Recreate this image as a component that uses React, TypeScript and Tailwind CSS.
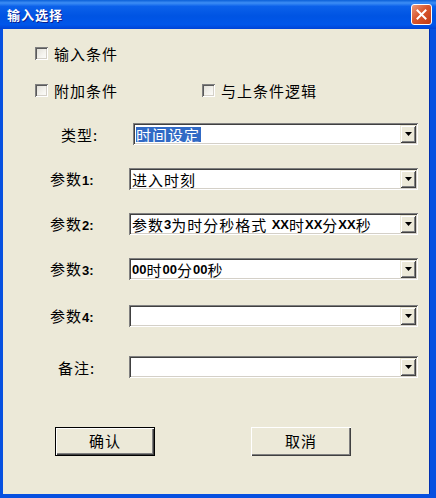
import React from "react";

const FONT = { fontFamily: '"Noto Sans CJK SC", "Noto Sans", sans-serif' };

function Check({ label }: { label: string }) {
  return (
    <div className="flex items-center h-[16px]">
      <div className="w-[13px] h-[13px] bg-[linear-gradient(135deg,#DCDAD2_0%,#F5F4EF_60%,#FFFFFF_100%)] shadow-[inset_1px_1px_0_#808080,inset_-1px_-1px_0_#ffffff,inset_2px_2px_0_#5A5A5A,inset_-2px_-2px_0_#d4d0c8]" />
      <span className="ml-[6px] text-[15px] tracking-[1px] text-black leading-none">{label}</span>
    </div>
  );
}

function Combo({ width, children }: { width: string; children?: React.ReactNode }) {
  return (
    <div
      className={`${width} h-[22px] bg-white flex items-center p-[2px] shadow-[inset_1px_1px_0_#808080,inset_-1px_-1px_0_#ffffff,inset_2px_2px_0_#404040,inset_-2px_-2px_0_#d4d0c8]`}
    >
      <div className="flex-1 h-full flex items-center pl-[1px] text-[15px] tracking-[1px] text-black leading-none whitespace-pre overflow-hidden">
        {children}
      </div>
      <div className="w-[16px] h-[18px] bg-[#ECE9D8] flex items-center justify-center shadow-[inset_1px_1px_0_#ece9d8,inset_-1px_-1px_0_#404040,inset_2px_2px_0_#ffffff,inset_-2px_-2px_0_#808080]">
        <svg width="7" height="4" viewBox="0 0 7 4">
          <path d="M0 0h7L3.5 4z" fill="#000" />
        </svg>
      </div>
    </div>
  );
}

function B({ children }: { children: React.ReactNode }) {
  return (
    <span className="font-bold tracking-[0px]" style={{ fontFamily: '"Liberation Sans", sans-serif', fontSize: 13 }}>
      {children}
    </span>
  );
}

function Row({ label, pl, w, mt, children }: { label: React.ReactNode; pl: string; w: string; mt: string; children?: React.ReactNode }) {
  return (
    <div className={`flex items-center ${mt}`}>
      <div className={`${w} ${pl} text-[15px] tracking-[1px] text-black leading-none whitespace-nowrap`}>{label}</div>
      <Combo width={w === "w-[130px]" ? "w-[285px]" : "w-[289px]"}>{children}</Combo>
    </div>
  );
}

function Btn({ label, def }: { label: string; def?: boolean }) {
  return (
    <div
      className={`w-[100px] h-[29px] bg-[#ECE9D8] flex items-center justify-center text-[15px] tracking-[1px] text-black ${
        def
          ? "border border-black shadow-[inset_1px_1px_0_#ffffff,inset_-1px_-1px_0_#404040,inset_-2px_-2px_0_#808080]"
          : "shadow-[inset_1px_1px_0_#ffffff,inset_-1px_-1px_0_#404040,inset_-2px_-2px_0_#808080]"
      }`}
    >
      {label}
    </div>
  );
}

export default function App() {
  return (
    <div className="w-[436px] h-[498px] flex flex-col bg-[#0650E0]" style={FONT}>
      <div className="h-[29px] flex items-center justify-between pl-[7px] pr-[4px] bg-[linear-gradient(to_bottom,#0A5FD8_0%,#3D8EF5_10%,#0B61EA_22%,#0054E3_55%,#0056EA_85%,#0043D6_100%)]">
        <span className="text-white font-bold text-[13px] tracking-[1px] [text-shadow:1px_1px_0_#0A1E8F]">输入选择</span>
        <div className="w-[21px] h-[21px] rounded-[3px] border border-white bg-[linear-gradient(135deg,#EC9A7C_0%,#D9572E_45%,#C23A14_100%)] flex items-center justify-center">
          <svg width="11" height="11" viewBox="0 0 11 11">
            <path d="M1.5 1.5l8 8M9.5 1.5l-8 8" stroke="#fff" strokeWidth="2" strokeLinecap="square" />
          </svg>
        </div>
      </div>
      <div className="flex-1 ml-[3px] mr-[6px] mb-[4px] bg-[#ECE9D8] flex flex-col pl-[32px] pt-[16px] shadow-[inset_-1px_0_0_#0030B0]">
        <Check label="输入条件" />
        <div className="flex mt-[21px]">
          <div className="w-[167px]">
            <Check label="附加条件" />
          </div>
          <Check label="与上条件逻辑" />
        </div>
        <div className="-ml-[32px] flex flex-col">
          <Row label="类型:" pl="pl-[58px]" w="w-[130px]" mt="mt-[25px]">
            <span className="bg-[#316AC5] text-white pr-[1px]">时间设定</span>
          </Row>
          <Row label={<>参数<B>1:</B></>} pl="pl-[47px]" w="w-[126px]" mt="mt-[23px]">
            进入时刻
          </Row>
          <Row label={<>参数<B>2:</B></>} pl="pl-[47px]" w="w-[126px]" mt="mt-[23px]">
            参数<B>3</B>为时分秒格式{" "}<B>XX</B>时<B>XX</B>分<B>XX</B>秒
          </Row>
          <Row label={<>参数<B>3:</B></>} pl="pl-[47px]" w="w-[126px]" mt="mt-[23px]">
            <B>00</B>时<B>00</B>分<B>00</B>秒
          </Row>
          <Row label={<>参数<B>4:</B></>} pl="pl-[47px]" w="w-[126px]" mt="mt-[25px]" />
          <Row label="备注:" pl="pl-[55px]" w="w-[126px]" mt="mt-[29px]" />
          <div className="flex mt-[49px] pl-[52px] gap-[96px]">
            <Btn label="确认" def />
            <Btn label="取消" />
          </div>
        </div>
      </div>
    </div>
  );
}
